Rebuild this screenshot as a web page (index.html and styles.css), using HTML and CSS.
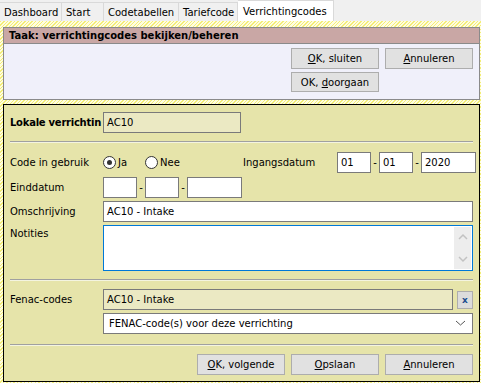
FILE: index.html
```html
<!DOCTYPE html>
<html>
<head>
<meta charset="utf-8">
<link rel="stylesheet" href="styles.css">
</head>
<body>
<div class="tabs">
  <div class="tab">Dashboard</div>
  <div class="tab">Start</div>
  <div class="tab">Codetabellen</div>
  <div class="tab">Tariefcode</div>
  <div class="tab active">Verrichtingcodes</div>
</div>
<div class="main">
  <div class="task">
    <div class="task-head">Taak: verrichtingcodes bekijken/beheren</div>
    <div class="task-body">
      <div class="btn-grid">
        <button class="btn"><u>O</u>K, sluiten</button>
        <button class="btn"><u>A</u>nnuleren</button>
        <button class="btn">OK, <u>d</u>oorgaan</button>
      </div>
    </div>
  </div>
  <div class="form">
    <div class="row">
      <div class="label bold">Lokale verrichtin</div>
      <div class="input ro w137">AC10</div>
    </div>
    <div class="sep"></div>
    <div class="row r1">
      <div class="label">Code in gebruik</div>
      <div class="radios">
        <span class="radio on"></span><span class="rlabel">Ja</span>
        <span class="radio"></span><span class="rlabel">Nee</span>
      </div>
      <div class="label ing">Ingangsdatum</div>
      <div class="date">
        <div class="input d2">01</div><span class="dash">-</span>
        <div class="input d2">01</div><span class="dash">-</span>
        <div class="input d4">2020</div>
      </div>
    </div>
    <div class="row r2">
      <div class="label">Einddatum</div>
      <div class="date">
        <div class="input d2"></div><span class="dash">-</span>
        <div class="input d2"></div><span class="dash">-</span>
        <div class="input d4"></div>
      </div>
    </div>
    <div class="row r3">
      <div class="label">Omschrijving</div>
      <div class="input grow">AC10 - Intake</div>
    </div>
    <div class="row r3 top">
      <div class="label">Notities</div>
      <div class="textarea grow">
        <div class="scroll">
          <svg width="10" height="7" viewBox="0 0 10 7"><path d="M1 6 L5 2 L9 6" fill="none" stroke="#c2c2c2" stroke-width="1.5"/></svg>
          <svg width="10" height="7" viewBox="0 0 10 7"><path d="M1 1 L5 5 L9 1" fill="none" stroke="#c2c2c2" stroke-width="1.5"/></svg>
        </div>
      </div>
    </div>
    <div class="sep s2"></div>
    <div class="row">
      <div class="label">Fenac-codes</div>
      <div class="input ro grow">AC10 - Intake</div>
      <button class="xbtn">x</button>
    </div>
    <div class="row r2b">
      <div class="label"></div>
      <div class="input select grow">FENAC-code(s) voor deze verrichting
        <svg width="11" height="7" viewBox="0 0 11 7"><path d="M1 1 L5.5 5 L10 1" fill="none" stroke="#555" stroke-width="1"/></svg>
      </div>
    </div>
    <div class="sep s3"></div>
    <div class="foot">
      <button class="btn"><u>O</u>K, volgende</button>
      <button class="btn"><u>O</u>pslaan</button>
      <button class="btn"><u>A</u>nnuleren</button>
    </div>
  </div>
</div>
</body>
</html>
```
FILE: styles.css
```css
* { box-sizing: border-box; }
html, body { margin: 0; padding: 0; }
body {
  width: 481px;
  height: 383px;
  overflow: hidden;
  font-family: "DejaVu Sans", Tahoma, sans-serif;
  font-size: 10px;
  color: #000;
  background: #f0f0f0;
}
.tabs {
  display: flex;
  height: 21px;
  align-items: flex-end;
  background: #f0f0f0;
}
.tab {
  height: 19px;
  padding: 0 4px;
  line-height: 19px;
  border: 1px solid #d9d9d9;
  border-bottom: none;
  border-left: none;
  background: #f0f0f0;
}
.tab:nth-child(1) { width: 62px; }
.tab:nth-child(2) { width: 42px; }
.tab:nth-child(3) { width: 75px; }
.tab:nth-child(4) { width: 59px; }
.tab.active {
  height: 21px;
  width: 96px;
  background: #fff;
  line-height: 21px;
  padding-left: 5px;
  border-color: #d9d9d9;
}
.main {
  height: 362px;
  padding: 6px 1px 0 3px;
  background: repeating-linear-gradient(-45deg, #f3ee78 0 1px, #fffde0 1px 2.5px);
}
.task {
  border: 1px solid #8a8a8a;
  background: #f0f0fa;
  height: 73px;
}
.task-head {
  height: 16px;
  background: #c9a7a5;
  border-bottom: 1px solid #8a8a8a;
  font-weight: bold;
  font-size: 10px;
  line-height: 15px;
  padding-left: 5px;
}
.task-body {
  display: flex;
  justify-content: flex-end;
  padding: 4px 6px 0 0;
}
.btn-grid {
  display: grid;
  grid-template-columns: 88px 88px;
  column-gap: 6px;
  row-gap: 3px;
}
.btn {
  font: inherit;
  height: 21px;
  width: 88px;
  padding: 0;
  background: #e1e1e1;
  border: 1px solid #adadad;
  color: #000;
  line-height: 19px;
  text-align: center;
}
.btn-grid .btn:nth-child(3) { height: 20px; }
.form {
  margin-top: 4px;
  height: 278px;
  border: 1px solid #000;
  background: #e6e4aa;
  padding: 7px 6px 0 6px;
}
.row {
  display: flex;
  align-items: center;
  height: 21px;
}
.row.top { align-items: flex-start; height: 46px; }
.row.top .label { padding-top: 3px; }
.r1 { height: 21px; }
.r2 { margin-top: 4px; }
.r2b { margin-top: 3px; }
.r3 { margin-top: 3px; }
.label {
  width: 93px;
  flex: none;
  white-space: nowrap;
  overflow: hidden;
}
.bold { font-weight: bold; font-size: 10px; letter-spacing: -0.25px; }
.input {
  height: 21px;
  border: 1px solid #7a7a7a;
  background: #fff;
  padding: 0 3px;
  line-height: 19px;
  white-space: nowrap;
  flex: none;
}
.ro { background: #ebe9c3; }
.w137 { width: 138px; }
.grow { flex: 1; }
.sep {
  height: 2px;
  border-top: 1px solid #a0a0a0;
  border-bottom: 1px solid #f4f4e0;
  margin: 8px 0 9px 0;
}
.s2 { margin: 8px 0 8px 0; }
.s3 { margin: 10px 0 8px 0; }
.radios {
  display: flex;
  align-items: center;
  width: 140px;
  flex: none;
}
.radio {
  width: 13px;
  height: 13px;
  border: 1px solid #333;
  border-radius: 50%;
  background: #fff;
  position: relative;
  flex: none;
}
.radio.on::after {
  content: "";
  position: absolute;
  left: 3px;
  top: 3px;
  width: 5px;
  height: 5px;
  border-radius: 50%;
  background: #333;
}
.rlabel { margin: 0 18px 0 2px; }
.ing { width: 94px; }
.date {
  display: flex;
  align-items: center;
}
.dash { width: 8px; text-align: center; }
.d2 { width: 34px; }
.d4 { width: 55px; }
.textarea {
  height: 46px;
  border: 1px solid #0078d7;
  background: #fff;
  display: flex;
  justify-content: flex-end;
  padding: 1px;
}
.scroll {
  width: 17px;
  background: #ededed;
  display: flex;
  flex-direction: column;
  justify-content: space-between;
  align-items: center;
  padding: 6px 0 6px 0;
}
.xbtn {
  font: inherit;
  width: 16px;
  height: 18px;
  margin-left: 4px;
  padding: 0;
  background: #dcdcdc;
  border: 1px solid #adadad;
  color: #1f4f8f;
  font-weight: bold;
  font-size: 9px;
  line-height: 14px;
}
.select {
  display: flex;
  align-items: center;
  justify-content: space-between;
  padding-left: 5px;
  padding-right: 6px;
}
.foot {
  display: flex;
  justify-content: flex-end;
  gap: 6px;
}
```
